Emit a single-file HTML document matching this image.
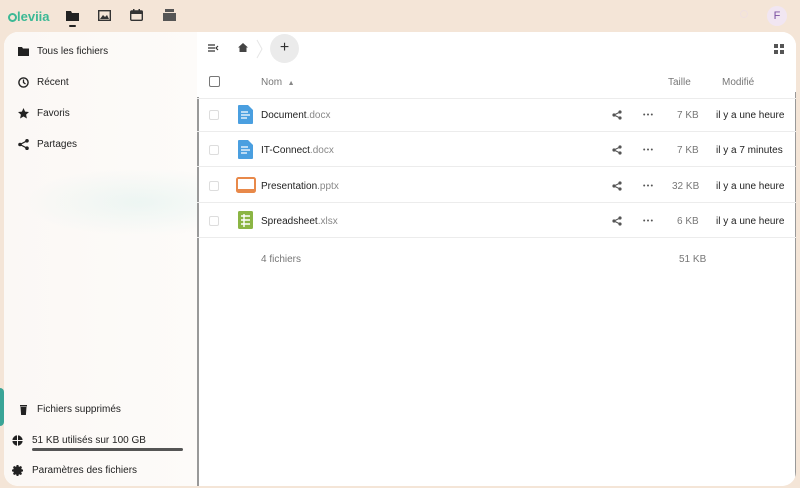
<!DOCTYPE html>
<html><head><meta charset="utf-8"><style>
*{margin:0;padding:0;box-sizing:border-box}
body{width:800px;height:488px;overflow:hidden;background:#f4e5d7;font-family:"Liberation Sans",sans-serif;font-size:10px;color:#222;position:relative}
.abs{position:absolute}
.card{position:absolute;left:4px;top:32px;width:792px;height:454px;background:#fff;border-radius:14px;overflow:hidden}
.side{position:absolute;left:0;top:0;width:193px;height:454px;background:linear-gradient(90deg,#fbf8f5,#fdfbf9)}
.nav{position:absolute;left:14px;font-size:10px;color:#222;display:flex;align-items:center}
.nav svg{width:11px;height:11px;margin-right:8px}
.main{position:absolute;left:193px;top:0;width:599px;height:454px;background:#fff}
.row{position:absolute;left:0;width:599px;height:35px;border-bottom:1px solid #ececec}
.cb{position:absolute;left:12px;width:10px;height:10px;border:1px solid #ddd;border-radius:2px}
.name{position:absolute;left:64px;font-size:10px;color:#222}
.name span{color:#888}
.g{color:#777}
</style></head><body>
<div class="abs" style="left:8px;top:9px;font-size:13px;font-weight:bold;color:#3cb995">
<span style="display:inline-block;width:9px;height:9px;border:2px solid #3cb995;border-radius:50%;vertical-align:-1px"></span>leviia</div>
<svg class="abs" style="left:66px;top:10px" width="13" height="18"><path d="M0 1h5l1 2h7v8H0z" fill="#222"/><rect x="3" y="15" width="7" height="2" rx="1" fill="#222"/></svg>
<svg class="abs" style="left:98px;top:10px" width="13" height="11"><rect x=".7" y=".7" width="11.6" height="9.6" fill="none" stroke="#333" stroke-width="1.4"/><path d="M2 9l3-4 2 2 2-2 2 4z" fill="#333"/></svg>
<svg class="abs" style="left:130px;top:9px" width="13" height="12"><rect x=".7" y="2" width="11.6" height="9.3" rx="1" fill="none" stroke="#333" stroke-width="1.4"/><rect x="1" y="2" width="11" height="3" fill="#333"/><rect x="3" y="0" width="1.5" height="3" fill="#333"/><rect x="8.5" y="0" width="1.5" height="3" fill="#333"/></svg>
<svg class="abs" style="left:163px;top:9px" width="13" height="12"><rect x="2" y="0" width="9" height="3" fill="#555"/><rect x="0" y="4" width="13" height="8" fill="#555"/></svg>
<div class="abs" style="left:740px;top:10px;width:8px;height:8px;border:1px solid #f0e0e0;border-radius:50%"></div>
<div class="abs" style="left:767px;top:6px;width:20px;height:20px;border-radius:50%;background:#f1e6f2;color:#7a4fa0;font-size:11px;text-align:center;line-height:20px">F</div>
<div class="abs" style="left:-4px;top:388px;width:8px;height:38px;border-radius:4px;background:#3aa597"></div>
<div class="card">
<div class="side">
<div class="nav" style="top:14px"><svg viewBox="0 0 11 11"><path d="M0 1h4l1 1.5h6V10H0z" fill="#222"/></svg>Tous les fichiers</div>
<div class="nav" style="top:45px"><svg viewBox="0 0 11 11"><circle cx="5.5" cy="5.5" r="4.6" fill="none" stroke="#222" stroke-width="1.4"/><path d="M5.5 2.5v3l2 1.5" fill="none" stroke="#222" stroke-width="1.3"/></svg>Récent</div>
<div class="nav" style="top:76px"><svg viewBox="0 0 11 11"><path d="M5.5 0l1.6 3.6 3.9.4-2.9 2.6.8 3.9-3.4-2-3.4 2 .8-3.9L0 4l3.9-.4z" fill="#222"/></svg>Favoris</div>
<div class="nav" style="top:107px"><svg viewBox="0 0 11 11"><circle cx="2" cy="5.5" r="1.8" fill="#222"/><circle cx="9" cy="1.8" r="1.8" fill="#222"/><circle cx="9" cy="9.2" r="1.8" fill="#222"/><path d="M2 5.5L9 1.8M2 5.5L9 9.2" stroke="#222" stroke-width="1.2"/></svg>Partages</div>
<div class="abs" style="left:0;top:130px;width:193px;height:80px;background:radial-gradient(ellipse at 70% 50%,rgba(200,235,230,.3),transparent 60%)"></div>
<div class="nav" style="top:372px"><svg viewBox="0 0 11 11"><path d="M2 1h7v1.5H2zM2.5 3h6l-.6 8H3.1z" fill="#222"/></svg>Fichiers supprimés</div>
<div class="nav" style="left:8px;top:403px"><svg viewBox="0 0 11 11" style="margin-right:9px"><circle cx="5.5" cy="5.5" r="5.2" fill="#222"/><path d="M5.5 0v11M0 5.5h11" stroke="#fbf8f5" stroke-width="1"/></svg>51 KB utilisés sur 100 GB</div>
<div class="abs" style="left:28px;top:416px;width:151px;height:3px;background:#555;border-radius:2px"></div>
<div class="nav" style="left:8px;top:433px"><svg viewBox="0 0 11 11" style="margin-right:9px"><circle cx="5.5" cy="5.5" r="3.2" fill="none" stroke="#222" stroke-width="2.4"/><path d="M5.5 0v11M0 5.5h11M1.6 1.6l7.8 7.8M9.4 1.6l-7.8 7.8" stroke="#222" stroke-width="2"/></svg>Paramètres des fichiers</div>
</div>
<div class="main">
<div class="abs" style="left:0;top:65px;width:2px;height:389px;background:#999"></div>
<div class="abs" style="right:0;top:60px;width:1px;height:394px;background:#999"></div>
<svg class="abs" style="left:11px;top:12px" width="11" height="8"><path d="M0 1h7M0 4h7M0 7h7M10 2L8 4l2 2" stroke="#333" stroke-width="1.2" fill="none"/></svg>
<svg class="abs" style="left:41px;top:11px" width="10" height="9"><path d="M5 0L0 4.5h1.5V9h7V4.5H10z" fill="#444"/></svg>
<svg class="abs" style="left:59px;top:7px" width="7" height="20"><path d="M1 1l5 9-5 9" stroke="#e6e6e6" fill="none"/></svg>
<div class="abs" style="left:73px;top:2px;width:29px;height:29px;border-radius:50%;background:#ebebeb;text-align:center;line-height:28px;font-size:16px;color:#333">+</div>
<svg class="abs" style="left:577px;top:12px" width="10" height="10"><rect width="4" height="4" fill="#555"/><rect x="6" width="4" height="4" fill="#555"/><rect y="6" width="4" height="4" fill="#555"/><rect x="6" y="6" width="4" height="4" fill="#555"/></svg>
<div class="row" style="top:32px"><div class="cb" style="top:12px;border-color:#777;width:11px;height:11px"></div><div class="name g" style="top:13px">Nom &nbsp;<span style="font-size:7px">▲</span></div><div class="abs g" style="left:471px;top:13px">Taille</div><div class="abs g" style="left:525px;top:13px">Modifié</div></div>
<div class="row" style="top:65px"><div class="cb" style="top:13px"></div><svg class="abs" style="left:41px;top:8px" width="15" height="19"><path d="M0 1a1 1 0 011-1h9l5 5v13a1 1 0 01-1 1H1a1 1 0 01-1-1z" fill="#4a9fe0"/><path d="M3 7h7M3 10h9M3 13h6" stroke="#fff" stroke-width="1.3"/></svg><div class="name" style="top:13px">Document<span>.docx</span></div><svg class="abs" style="left:415px;top:13px" width="10" height="10"><circle cx="2" cy="5" r="1.6" fill="#555"/><circle cx="8" cy="2" r="1.6" fill="#555"/><circle cx="8" cy="8" r="1.6" fill="#555"/><path d="M2 5L8 2M2 5L8 8" stroke="#555"/></svg><svg class="abs" style="left:446px;top:16px" width="10" height="3"><circle cx="1.2" cy="1.5" r="1" fill="#555"/><circle cx="5" cy="1.5" r="1" fill="#555"/><circle cx="8.8" cy="1.5" r="1" fill="#555"/></svg><div class="abs g" style="left:480px;top:13px">7 KB</div><div class="abs" style="left:519px;top:13px">il y a une heure</div></div>
<div class="row" style="top:100px"><div class="cb" style="top:13px"></div><svg class="abs" style="left:41px;top:8px" width="15" height="19"><path d="M0 1a1 1 0 011-1h9l5 5v13a1 1 0 01-1 1H1a1 1 0 01-1-1z" fill="#4a9fe0"/><path d="M3 7h7M3 10h9M3 13h6" stroke="#fff" stroke-width="1.3"/></svg><div class="name" style="top:13px">IT-Connect<span>.docx</span></div><svg class="abs" style="left:415px;top:13px" width="10" height="10"><circle cx="2" cy="5" r="1.6" fill="#555"/><circle cx="8" cy="2" r="1.6" fill="#555"/><circle cx="8" cy="8" r="1.6" fill="#555"/><path d="M2 5L8 2M2 5L8 8" stroke="#555"/></svg><svg class="abs" style="left:446px;top:16px" width="10" height="3"><circle cx="1.2" cy="1.5" r="1" fill="#555"/><circle cx="5" cy="1.5" r="1" fill="#555"/><circle cx="8.8" cy="1.5" r="1" fill="#555"/></svg><div class="abs g" style="left:480px;top:13px">7 KB</div><div class="abs" style="left:519px;top:13px">il y a 7 minutes</div></div>
<div class="row" style="top:136px"><div class="cb" style="top:13px"></div><svg class="abs" style="left:39px;top:9px" width="20" height="16"><rect x="1" y="1" width="18" height="14" rx="1.5" fill="none" stroke="#e8894a" stroke-width="2"/><rect x="1" y="12" width="18" height="3" fill="#e8894a"/></svg><div class="name" style="top:13px">Presentation<span>.pptx</span></div><svg class="abs" style="left:415px;top:13px" width="10" height="10"><circle cx="2" cy="5" r="1.6" fill="#555"/><circle cx="8" cy="2" r="1.6" fill="#555"/><circle cx="8" cy="8" r="1.6" fill="#555"/><path d="M2 5L8 2M2 5L8 8" stroke="#555"/></svg><svg class="abs" style="left:446px;top:16px" width="10" height="3"><circle cx="1.2" cy="1.5" r="1" fill="#555"/><circle cx="5" cy="1.5" r="1" fill="#555"/><circle cx="8.8" cy="1.5" r="1" fill="#555"/></svg><div class="abs g" style="left:475px;top:13px">32 KB</div><div class="abs" style="left:519px;top:13px">il y a une heure</div></div>
<div class="row" style="top:171px"><div class="cb" style="top:13px"></div><svg class="abs" style="left:41px;top:8px" width="15" height="18"><rect width="15" height="18" rx="1.5" fill="#8bb544"/><path d="M3 5h9M3 9h9M3 13h9M6 3v13" stroke="#fff" stroke-width="1.4"/></svg><div class="name" style="top:13px">Spreadsheet<span>.xlsx</span></div><svg class="abs" style="left:415px;top:13px" width="10" height="10"><circle cx="2" cy="5" r="1.6" fill="#555"/><circle cx="8" cy="2" r="1.6" fill="#555"/><circle cx="8" cy="8" r="1.6" fill="#555"/><path d="M2 5L8 2M2 5L8 8" stroke="#555"/></svg><svg class="abs" style="left:446px;top:16px" width="10" height="3"><circle cx="1.2" cy="1.5" r="1" fill="#555"/><circle cx="5" cy="1.5" r="1" fill="#555"/><circle cx="8.8" cy="1.5" r="1" fill="#555"/></svg><div class="abs g" style="left:480px;top:13px">6 KB</div><div class="abs" style="left:519px;top:13px">il y a une heure</div></div>
<div class="abs g" style="left:64px;top:222px">4 fichiers</div>
<div class="abs g" style="left:482px;top:222px">51 KB</div>
</div>
</div>
</body></html>
